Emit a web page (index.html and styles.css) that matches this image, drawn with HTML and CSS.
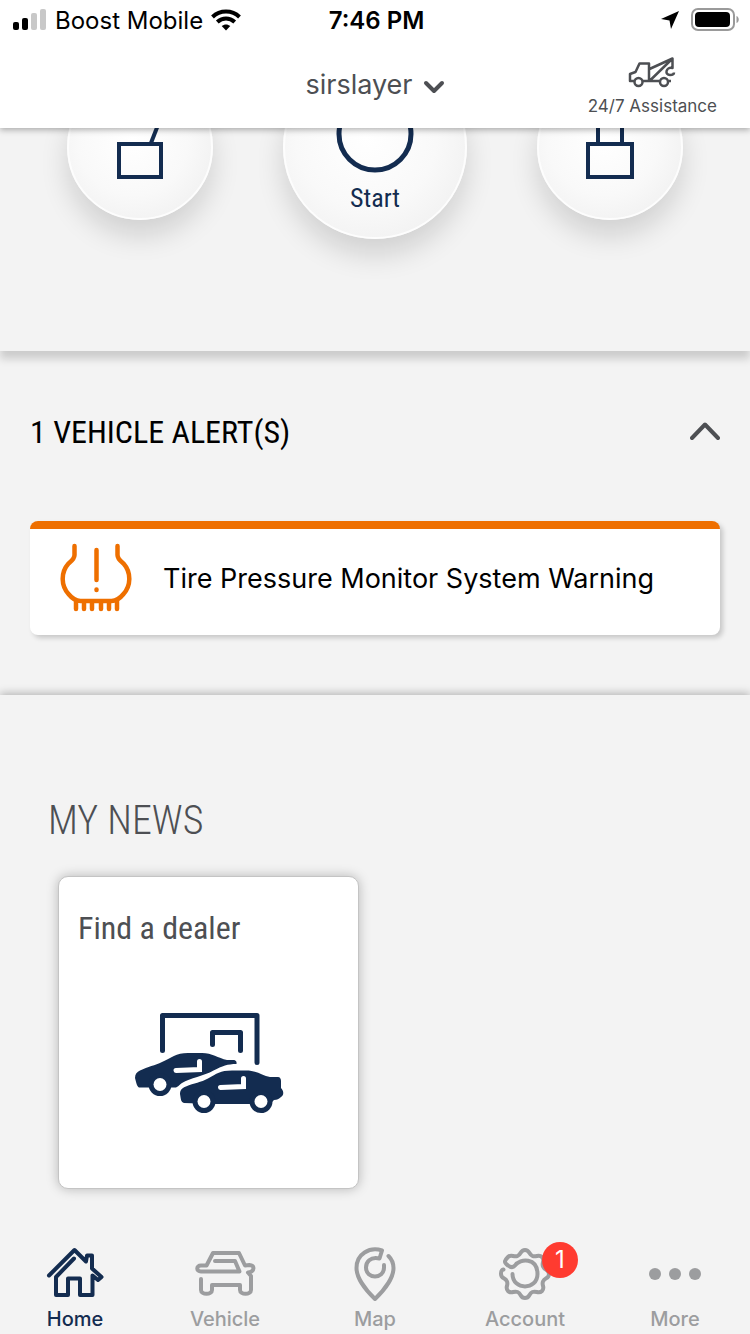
FILE: index.html
```html
<!DOCTYPE html>
<html lang="en">
<head>
    <meta charset="UTF-8">
    <meta name="viewport" content="width=device-width, initial-scale=1.0">
    <title>Home</title>
    <link rel="stylesheet" href="styles.css">
</head>
<body>

<header class="header">
    <div class="status">
        <div class="status-left">
            <svg width="34" height="22" viewBox="0 0 34 22" aria-hidden="true">
                <rect x="0" y="13" width="6" height="8" rx="2"/>
                <rect x="9" y="9" width="6" height="12" rx="2"/>
                <rect x="18" y="4" width="6" height="17" rx="2" fill="#c8c8c8"/>
                <rect x="27" y="0" width="6" height="21" rx="2" fill="#c8c8c8"/>
            </svg>
            <span>Boost Mobile</span>
            <svg width="30" height="22" viewBox="0 0 30 22" fill="none" stroke="#000" stroke-width="4" aria-hidden="true">
                <path d="M1.500 8C9 .8 21 .8 28.500 8"/>
                <path d="M6.300 13C11.500 8.200 18.500 8.200 23.700 13"/>
                <path d="M15 21.500l-4.300-4.400c2.500-2.200 6.100-2.200 8.600 0z" fill="#000" stroke="none"/>
            </svg>
        </div>
        <span class="clock">7:46 PM</span>
        <div class="status-right">
            <svg width="18" height="18" viewBox="0 0 18 18" aria-hidden="true"><path d="M18 0L10 18 8.500 9.500 0 8z"/></svg>
            <svg width="49" height="24" viewBox="0 0 49 24" aria-hidden="true">
                <rect x="1" y="1" width="42" height="21" rx="6" fill="none" stroke="#9a9a9a" stroke-width="2"/>
                <rect x="4" y="4" width="35" height="15" rx="4"/>
                <path d="M45.500 8c3 1 3 6 0 7z" fill="#9a9a9a"/>
            </svg>
        </div>
    </div>
    <div class="topbar">
        <button type="button" class="vehicle-picker">
            sirslayer
            <svg width="22" height="14" viewBox="0 0 22 14" fill="none" stroke="#4d4f53" stroke-width="4" stroke-linecap="round" stroke-linejoin="round" aria-hidden="true"><path d="M3 3l8 8 8-8"/></svg>
        </button>
        <a href="#" class="assistance">
            <svg width="48" height="32" viewBox="0 0 48 32" fill="none" stroke="#4d4f53" stroke-width="2.500" stroke-linejoin="round" aria-hidden="true">
                <path d="M6 25H2v-7l5.500-2 4-8.500H21V25h-6.500M21 25h10.500M21.500 13L44.500 2.500V12c-7-1.500-8 7-2.500 7 2.500 0 4-.5 4-2.500M22 24.500L43.500 3.500M40.500 25H43"/>
                <circle cx="10.500" cy="26" r="4"/>
                <circle cx="36" cy="26" r="4"/>
            </svg>
            24/7 Assistance
        </a>
    </div>
</header>

<main>
    <!-- remote controls, scrolled half way under the header -->
    <section class="remote">
        <div class="remote-row">
            <button type="button" class="round" aria-label="Unlock">
                <svg width="52" height="66" viewBox="0 0 52 66" fill="none" stroke="#132c50" stroke-width="4" aria-hidden="true">
                    <path d="M5 30h42v33H5z"/>
                    <path d="M37 29l7-18"/>
                </svg>
            </button>
            <button type="button" class="round round-big">
                <svg width="78" height="78" viewBox="0 0 78 78" fill="none" stroke="#132c50" stroke-width="5" aria-hidden="true"><circle cx="39" cy="39" r="36"/></svg>
                Start
            </button>
            <button type="button" class="round" aria-label="Lock">
                <svg width="52" height="66" viewBox="0 0 52 66" fill="none" stroke="#132c50" stroke-width="4" aria-hidden="true">
                    <path d="M4 30h44v33H4z"/>
                    <path d="M14 28V12c0-13 24-13 24 0v16"/>
                </svg>
            </button>
        </div>
    </section>

    <section class="alerts">
        <div class="alerts-head">
            <h2>1 VEHICLE ALERT(S)</h2>
            <button type="button" class="collapse" aria-label="Collapse alerts">
                <svg width="30" height="20" viewBox="0 0 30 20" fill="none" stroke="#4d4f53" stroke-width="4" stroke-linecap="round" stroke-linejoin="round" aria-hidden="true"><path d="M2 16L15 2.500 28 16"/></svg>
            </button>
        </div>
        <div class="alert">
            <svg width="72" height="70" viewBox="0 0 72 70" fill="none" stroke="#ee6f00" stroke-width="4.500" stroke-linecap="round" aria-hidden="true">
                <path d="M14.500 3v9c0 4-3 6-6 8.500-8 9-7.500 22 0 30.500 4 5 8 7 12 7h31c4 0 8-2 12-7 7.500-8.500 8-21.500 0-30.500-3-2.500-6-4.500-6-8.500V3"/>
                <path d="M36.500 7v30M36.500 46.500v.5"/>
                <path d="M16 58v8M24 60v6M32 60v6M41 60v6M49 60v6M57 58v8"/>
            </svg>
            <span>Tire Pressure Monitor System Warning</span>
        </div>
    </section>

    <section class="news">
        <h2>MY NEWS</h2>
        <a href="#" class="card">
            <h3>Find a dealer</h3>
            <svg width="150" height="104" viewBox="0 0 150 104" fill="#132c50" aria-hidden="true">
                <g fill="none" stroke="#132c50" stroke-width="5" stroke-linecap="round" stroke-linejoin="round">
                    <path d="M28.500 38.500V3.500h94.500v47"/>
                    <path d="M78.500 32.500V20.500h28v18"/>
                </g>
                <path d="M1 66c0-4 2-6 5-7.500 8-4 15-5 22-8.500 9-4 14-9 26-9h14c10 0 16 5 25 7h6c3 0 4 2 3.500 4-9 0-14 2-23 6.500C70 64 56 66 48 71c-3 2-4 4.500-7 4.500H5c-2-1-2.500-4-4-9.500z"/>
                <circle cx="26" cy="72.500" r="11.500"/>
                <path d="M46 82c0-4 2-6 6-7.500 8-3.500 15-4 22-8 9-5 12-8 24-8h14c11 0 16 5 24 6.500h8c2 0 3 2 3 4v7c3 3 3 7 0 9-2 2-4 3-7 3l-4 4H80L50 91c-3-1-3-3-4-9z"/>
                <circle cx="70" cy="89.500" r="11.500"/>
                <circle cx="127" cy="89.500" r="11.500"/>
                <g fill="#fff">
                    <circle cx="26" cy="72.500" r="6.500"/>
                    <circle cx="70" cy="89.500" r="6.500"/>
                    <circle cx="127" cy="89.500" r="6.500"/>
                </g>
                <g fill="none" stroke="#fff" stroke-width="5" stroke-linecap="round">
                    <path d="M42 58.500l23.500-1v-8"/>
                    <path d="M86.500 75.500l23-1v-8"/>
                </g>
            </svg>
        </a>
    </section>
</main>

<nav class="tabs">
    <a href="#" class="tab active">
        <svg width="58" height="54" viewBox="0 0 58 54" aria-hidden="true"><path d="M3 28.500L28.500 3 40 14.500l1-6h5v13l9.500 8.500-3.500 3-5.500-4.500v19.500H34V31.500H22v16.500H10V30l18-18.500"/></svg>
        Home
    </a>
    <a href="#" class="tab">
        <svg width="62" height="54" viewBox="0 0 62 54" aria-hidden="true"><path d="M7 32v11c0 5 11 5 11 0v-5h28v5c0 5 11 5 11 0V29l-3-3.500c7-1 7-7.500 1.500-7.500l-4.500.5L45 6H19l-6.500 12.500H7C2 18.500 2 24.500 7 24.500h38.500L41 14H21"/></svg>
        Vehicle
    </a>
    <a href="#" class="tab">
        <svg width="44" height="54" viewBox="0 0 44 54" aria-hidden="true"><path d="M35.500 9c3.500 3.500 5 7.500 5 12 0 9-8 21-18.500 31C11.500 42 3.500 30 3.500 21c0-14 13-21.500 25.500-17.500l-2.500 8C17 9.500 13 15 13 20.500c0 12 18 12 18 0V18"/></svg>
        Map
    </a>
    <a href="#" class="tab">
        <svg width="54" height="54" viewBox="-27 -27 54 54" aria-hidden="true"><path d="M-12.500 0C-12.500 16.500 12.500 16.500 12.500 0S-5-16-10-8.500C-12-6-15-7-17-8.500C-22-12-20-14-17-17C-13.400-20.500-11.500-16.300-7.500-18C-3.400-19.700-5-24 0-24C5-24 3.400-19.700 7.500-18C11.500-16.300 13.400-20.500 17-17C20.500-13.400 16.300-11.500 18-7.500C19.700-3.400 24-5 24 0C24 5 19.700 3.400 18 7.500C16.300 11.500 20.500 13.400 17 17C13.400 20.500 11.500 16.300 7.500 18C3.400 19.700 5 24 0 24C-5 24-3.400 19.700-7.500 18C-11.500 16.300-13.400 20.500-17 17C-20.500 13.400-16.300 11.500-18 7.500C-19.700 3.400-24 5-24 0C-24-3-23.500-4-21.500-4.500"/></svg>
        <span class="badge">1</span>
        Account
    </a>
    <a href="#" class="tab">
        <svg width="54" height="54" viewBox="0 0 54 54" aria-hidden="true"><g fill="#9c9d9f" stroke="none"><circle cx="7" cy="27" r="6"/><circle cx="27" cy="27" r="6"/><circle cx="47" cy="27" r="6"/></g></svg>
        More
    </a>
</nav>

</body>
</html>
```

FILE: styles.css
```css
* {
    box-sizing: border-box;
}

body {
    margin: 0;
    min-height: 100vh;
    display: flex;
    flex-direction: column;
    background-color: #f3f3f3;
    font-family: Inter, Roboto, sans-serif;
    color: #4d4f53;
}

h2, h3 {
    margin: 0;
    font-weight: normal;
}

button {
    padding: 0;
    border: 0;
    background: none;
    font-family: inherit;
    color: inherit;
}

a {
    color: inherit;
    text-decoration: none;
}

svg {
    display: block;
    flex: none;
}

h2, h3, .round {
    font-family: "Roboto Condensed", "Liberation Sans Narrow", "Open Sans", sans-serif;
}

/* header */
.header {
    position: relative;
    z-index: 1;
    background-color: #fff;
    box-shadow: 0 2px 6px rgba(0, 0, 0, 0.3);
}

.status {
    display: grid;
    grid-template-columns: 1fr auto 1fr;
    align-items: center;
    height: 40px;
    padding: 0 10px 0 13px;
    font-size: 24px;
    color: #000;
}

.status-left, .status-right {
    display: flex;
    align-items: center;
    gap: 8px;
}

.status-right {
    justify-content: flex-end;
    gap: 12px;
}

.clock {
    font-weight: 600;
}

.topbar {
    display: grid;
    grid-template-columns: 1fr auto 1fr;
    height: 88px;
    padding: 0 33px;
}

.vehicle-picker {
    grid-column: 2;
    display: flex;
    align-items: center;
    gap: 10px;
    font-size: 27px;
}

.vehicle-picker svg {
    margin-top: 6px;
}

.assistance {
    justify-self: end;
    display: flex;
    flex-direction: column;
    align-items: center;
    gap: 8px;
    padding-top: 16px;
    font-size: 17px;
    line-height: 20px;
}

/* remote controls */
.remote {
    overflow: hidden;
    padding-bottom: 112px;
    box-shadow: 0 8px 8px rgba(0, 0, 0, 0.16);
}

.remote-row {
    display: flex;
    justify-content: space-between;
    align-items: center;
    margin-top: -73px;
    padding: 0 67px;
}

.round {
    display: flex;
    flex-direction: column;
    align-items: center;
    justify-content: center;
    width: 146px;
    height: 146px;
    border: 2px solid #fdfdfd;
    border-radius: 50%;
    background: radial-gradient(circle at 45% 45%, #fff 0%, #f9f9f9 50%, #ececec 100%);
    box-shadow: 0 16px 28px rgba(0, 0, 0, 0.14);
    font-size: 26px;
    color: #132c50;
}

.round-big {
    justify-content: flex-end;
    gap: 10px;
    width: 184px;
    height: 184px;
    padding-bottom: 24px;
    line-height: 30px;
}

/* alerts */
.alerts {
    padding: 60px 30px;
}

.alerts-head {
    display: flex;
    justify-content: space-between;
    align-items: center;
    height: 42px;
    margin-bottom: 68px;
}

.alerts-head h2 {
    font-size: 32px;
    line-height: 42px;
    color: #000;
}

.alert {
    display: flex;
    align-items: center;
    gap: 31px;
    height: 114px;
    padding: 0 30px 8px;
    border-top: 8px solid #ee6f00;
    border-radius: 8px;
    background-color: #fff;
    box-shadow: 3px 3px 5px rgba(0, 0, 0, 0.18);
    font-size: 27px;
    color: #000;
}

/* news */
.news {
    padding: 102px 48px 47px;
    box-shadow: 0 -2px 8px rgba(0, 0, 0, 0.25);
    clip-path: inset(-12px 0 0 0);
}

.news h2 {
    margin-bottom: 31px;
    font-size: 40px;
    font-weight: 300;
    line-height: 48px;
}

.card {
    display: flex;
    flex-direction: column;
    align-items: center;
    gap: 64px;
    width: 301px;
    height: 313px;
    margin-left: 10px;
    padding: 31px 19px;
    border: 1px solid #c4c4c4;
    border-radius: 10px;
    background-color: #fff;
    box-shadow: 0 0 12px rgba(0, 0, 0, 0.25);
}

.card h3 {
    align-self: flex-start;
    font-size: 32px;
    line-height: 40px;
}

/* bottom tabs */
.tabs {
    display: grid;
    grid-template-columns: repeat(5, 1fr);
    margin-top: auto;
}

.tab {
    position: relative;
    display: flex;
    flex-direction: column;
    align-items: center;
    gap: 5px;
    padding-bottom: 2px;
    font-size: 20px;
    font-weight: 500;
    line-height: 26px;
    color: #9c9d9f;
}

.tab svg {
    fill: none;
    stroke: #9c9d9f;
    stroke-width: 4;
    stroke-linecap: round;
    stroke-linejoin: round;
}

.active {
    color: #132c50;
}

.active svg {
    stroke: #132c50;
}

.badge {
    position: absolute;
    top: -5px;
    left: calc(50% + 17px);
    width: 36px;
    height: 36px;
    border-radius: 50%;
    background-color: #ff3b30;
    font-size: 24px;
    font-weight: 400;
    line-height: 36px;
    text-align: center;
    color: #fff;
}
```
